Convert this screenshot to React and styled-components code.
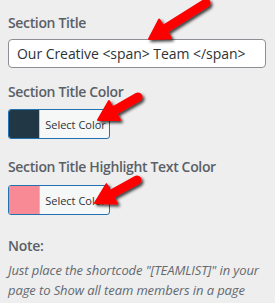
import React from "react";
import styled, { createGlobalStyle } from "styled-components";

const Global = createGlobalStyle`
  html, body { margin: 0; padding: 0; background: #eeeeee; }
  body { font-family: "Open Sans", "Noto Sans", sans-serif; width: 275px; height: 303px; overflow: hidden; }
`;

const Page = styled.div`
  position: relative;
  width: 275px;
  height: 303px;
  box-sizing: border-box;
  padding: 13px 9px 0 8px;
  display: flex;
  flex-direction: column;
`;

const Label = styled.div`
  font-size: 14px;
  line-height: 20px;
  font-weight: 600;
  color: #5a6067;
  letter-spacing: -0.35px;
  margin-top: ${(p) => p.$mt || 0}px;
`;

const TextInput = styled.div`
  margin-top: 6px;
  height: 29px;
  box-sizing: border-box;
  border: 1px solid #8c8f94;
  border-radius: 4px;
  background: #fff;
  padding: 0 8px;
  display: flex;
  align-items: center;
  font-size: 14px;
  color: #2c3338;
  letter-spacing: -0.05px;
  white-space: nowrap;
`;

const ColorButton = styled.div`
  margin-top: ${(p) => p.$mt || 7}px;
  width: 102px;
  height: 30px;
  box-sizing: border-box;
  border: 1px solid #2271b1;
  border-radius: 3px;
  background: #f6f7f7;
  display: flex;
  overflow: hidden;
`;

const Swatch = styled.div`
  width: 30px;
  background: ${(p) => p.$color};
  border-right: 1px solid #c3c4c7;
`;

const ButtonText = styled.div`
  flex: 1;
  display: flex;
  align-items: center;
  justify-content: center;
  font-size: 11px;
  color: #2c3338;
  padding-left: 2px;
`;

const NoteTitle = styled.div`
  margin-top: 21px;
  font-size: 14px;
  line-height: 20px;
  font-weight: 600;
  color: #5a6067;
  letter-spacing: -0.3px;
`;

const NoteText = styled.div`
  margin-top: 4px;
  font-size: 13px;
  line-height: 20px;
  font-style: italic;
  color: #646970;
  letter-spacing: -0.1px;
`;

const Overlay = styled.svg`
  position: absolute;
  left: 0;
  top: 0;
  pointer-events: none;
`;

function Arrow({ tail, tip }) {
  const [tx, ty] = tail;
  const [px, py] = tip;
  const dx = px - tx;
  const dy = py - ty;
  const len = Math.hypot(dx, dy);
  const ux = dx / len;
  const uy = dy / len;
  const nx = -uy;
  const ny = ux;
  const headLen = 19;
  const headHalf = 11;
  const bx = px - ux * headLen;
  const by = py - uy * headLen;
  const head = `${px},${py} ${bx + nx * headHalf},${by + ny * headHalf} ${bx - nx * headHalf},${by - ny * headHalf}`;
  return (
    <g filter="url(#shadow)">
      <line x1={tx} y1={ty} x2={bx + ux * 2} y2={by + uy * 2} stroke="#ff0000" strokeWidth="9" strokeLinecap="round" />
      <polygon points={head} fill="#ff0000" stroke="#ff0000" strokeWidth="2" strokeLinejoin="round" />
    </g>
  );
}

export default function App() {
  return (
    <>
      <Global />
      <Page>
        <Label>Section Title</Label>
        <TextInput>Our Creative &lt;span&gt; Team &lt;/span&gt;</TextInput>
        <Label $mt={14}>Section Title Color</Label>
        <ColorButton>
          <Swatch $color="#213745" />
          <ButtonText>Select Color</ButtonText>
        </ColorButton>
        <Label $mt={18}>Section Title Highlight Text Color</Label>
        <ColorButton $mt={8}>
          <Swatch $color="#f88a95" />
          <ButtonText>Select Color</ButtonText>
        </ColorButton>
        <NoteTitle>Note:</NoteTitle>
        <NoteText>
          Just place the shortcode "[TEAMLIST]" in your page to Show all team members in a page
        </NoteText>
        <Overlay width="275" height="303" viewBox="0 0 275 303">
          <defs>
            <filter id="shadow" x="-30%" y="-30%" width="160%" height="160%">
              <feDropShadow dx="2" dy="2" stdDeviation="1.6" floodColor="#000" floodOpacity="0.75" />
            </filter>
          </defs>
          <Arrow tail={[206, 3]} tip={[149, 39]} />
          <Arrow tail={[138, 97]} tip={[98, 120]} />
          <Arrow tail={[137, 180]} tip={[95, 203]} />
        </Overlay>
      </Page>
    </>
  );
}
